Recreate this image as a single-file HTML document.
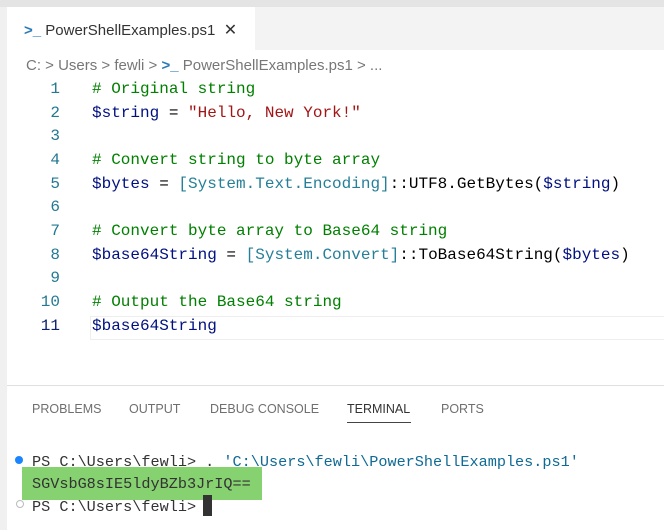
<!DOCTYPE html>
<html><head><style>
body{margin:0;width:664px;height:530px;overflow:hidden;background:#fff;position:relative;font-family:"Liberation Sans",sans-serif}
.a{position:absolute;white-space:pre}
.m{font-family:"Liberation Mono",monospace;font-size:16px}
.ln{color:#237893;width:60px;text-align:right;left:0}
.c{color:#008000}.s{color:#a31515}.v{color:#001080}.t{color:#267f99}.k{color:#000}
.tab{font-size:12.5px;color:#6f6f6f;top:402px}
</style></head><body>
<div class="a" style="left:0;top:0;width:664px;height:7px;background:#e4e4e4"></div>
<div class="a" style="left:0;top:7px;width:664px;height:43px;background:#f3f3f3"></div>
<div class="a" style="left:0;top:7px;width:7px;height:523px;background:#f0f0f0"></div>
<div class="a" style="left:7px;top:7px;width:248px;height:44px;background:#fff"></div>
<div class="a" style="left:24px;top:20px;font-size:15px;color:#333"><span style="color:#2a7ab8;font-weight:bold">&gt;_</span> PowerShellExamples.ps1 &nbsp;<span style="font-size:16px">✕</span></div>
<div class="a" style="left:26px;top:57px;font-size:15px;color:#777">C: &gt; Users &gt; fewli &gt; <span style="color:#2a7ab8;font-weight:bold">&gt;_</span> PowerShellExamples.ps1 &gt; ...</div>
<div class="a" style="left:90px;top:316px;width:574px;height:22px;border:1px solid #eee"></div>
<div class="a m ln" style="top:80px">1</div><div class="a m" style="left:92px;top:80px"><span class="c"># Original string</span></div>
<div class="a m ln" style="top:104px">2</div><div class="a m" style="left:92px;top:104px"><span class="v">$string</span> = <span class="s">"Hello, New York!"</span></div>
<div class="a m ln" style="top:127px">3</div>
<div class="a m ln" style="top:151px">4</div><div class="a m" style="left:92px;top:151px"><span class="c"># Convert string to byte array</span></div>
<div class="a m ln" style="top:175px">5</div><div class="a m" style="left:92px;top:175px"><span class="v">$bytes</span> = <span class="t">[System.Text.Encoding]</span>::UTF8.GetBytes(<span class="v">$string</span>)</div>
<div class="a m ln" style="top:198px">6</div>
<div class="a m ln" style="top:222px">7</div><div class="a m" style="left:92px;top:222px"><span class="c"># Convert byte array to Base64 string</span></div>
<div class="a m ln" style="top:246px">8</div><div class="a m" style="left:92px;top:246px"><span class="v">$base64String</span> = <span class="t">[System.Convert]</span>::ToBase64String(<span class="v">$bytes</span>)</div>
<div class="a m ln" style="top:269px">9</div>
<div class="a m ln" style="top:293px">10</div><div class="a m" style="left:92px;top:293px"><span class="c"># Output the Base64 string</span></div>
<div class="a m ln" style="top:317px;color:#0b216f">11</div><div class="a m" style="left:92px;top:317px"><span class="v">$base64String</span></div>
<div class="a" style="left:7px;top:385px;width:657px;height:1px;background:#e0e0e0"></div>
<div class="a tab" style="left:32px">PROBLEMS</div>
<div class="a tab" style="left:129px">OUTPUT</div>
<div class="a tab" style="left:210px">DEBUG CONSOLE</div>
<div class="a tab" style="left:347px;color:#333">TERMINAL</div>
<div class="a" style="left:347px;top:422px;width:64px;height:1px;background:#444"></div>
<div class="a tab" style="left:441px">PORTS</div>
<div class="a" style="left:15px;top:456px;width:8px;height:8px;border-radius:50%;background:#1a85ff"></div>
<div class="a" style="left:16px;top:500px;width:6px;height:6px;border-radius:50%;border:1px solid #bbb"></div>
<div class="a" style="left:22px;top:467px;width:240px;height:33px;background:#86d170"></div>
<div class="a m" style="left:32px;top:453px;font-size:15.2px;color:#333">PS C:\Users\fewli&gt; . <span style="color:#0f6a95">'C:\Users\fewli\PowerShellExamples.ps1'</span></div>
<div class="a m" style="left:32px;top:475px;font-size:15.2px;color:#333">SGVsbG8sIE5ldyBZb3JrIQ==</div>
<div class="a m" style="left:32px;top:498px;font-size:15.2px;color:#333">PS C:\Users\fewli&gt;</div>
<div class="a" style="left:203px;top:495px;width:9px;height:21px;background:#333"></div>
</body></html>
